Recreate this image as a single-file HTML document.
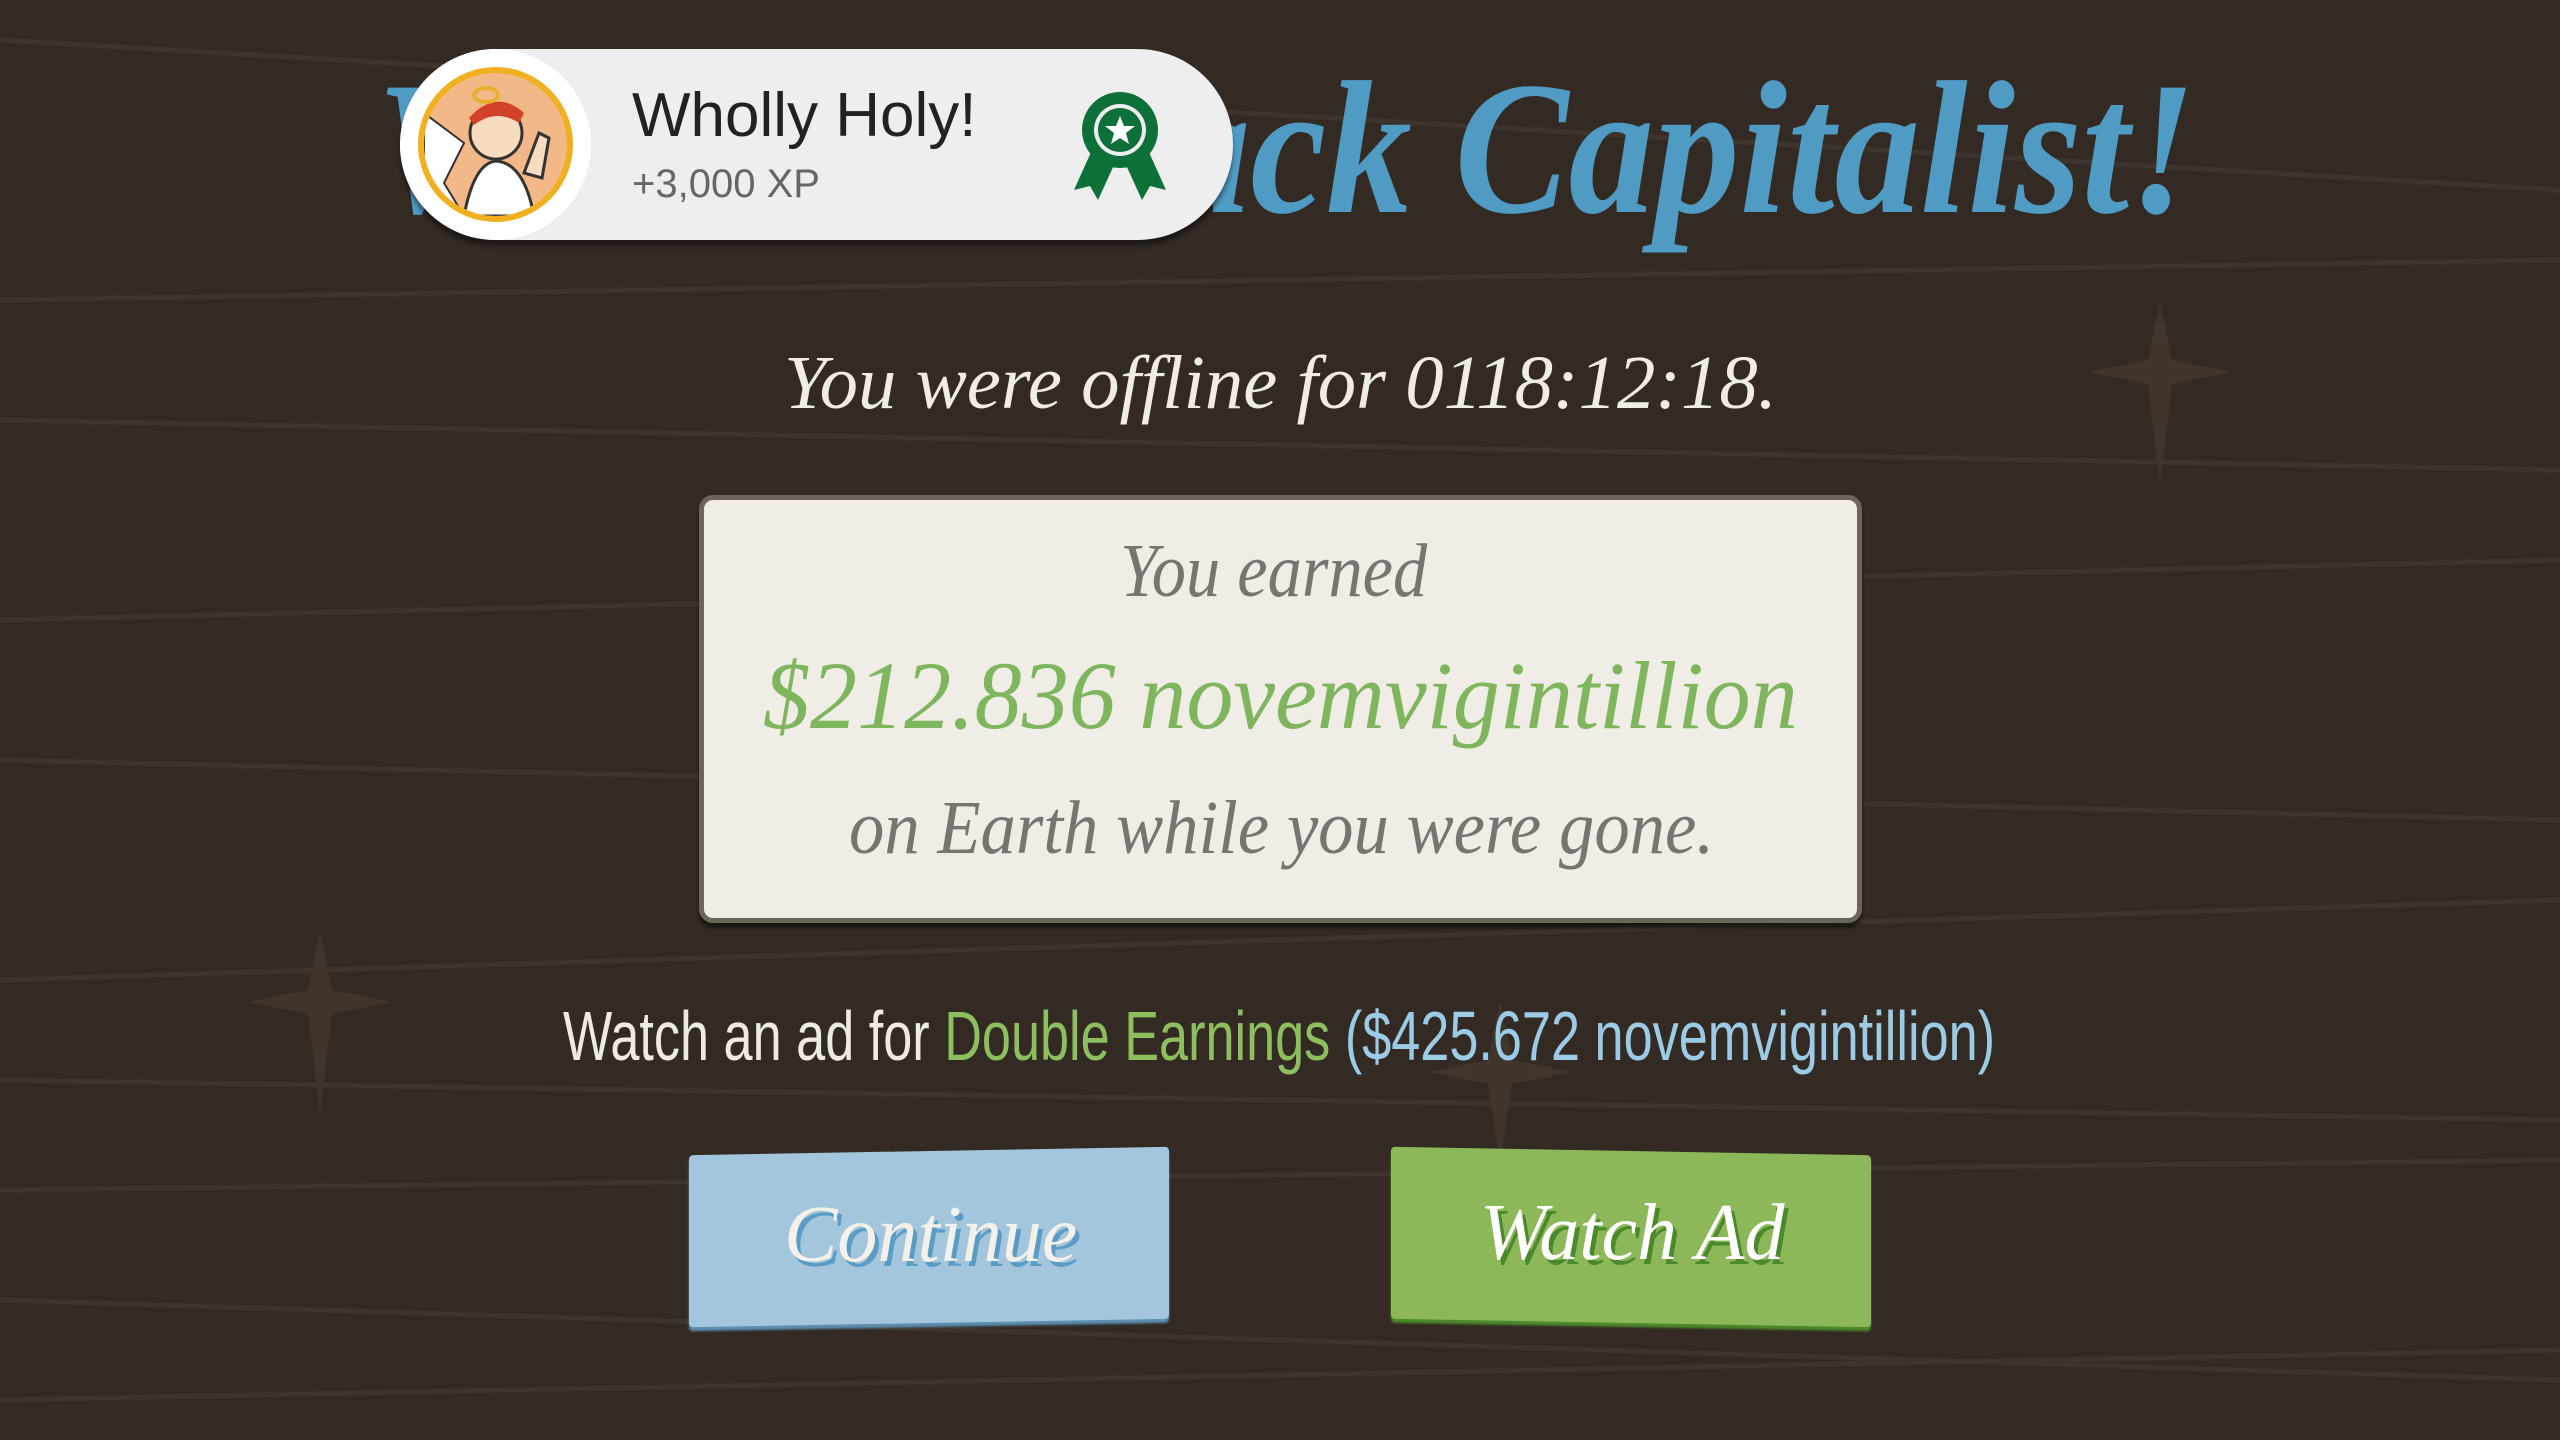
<!DOCTYPE html>
<html><head><meta charset="utf-8"><style>
*{margin:0;padding:0;box-sizing:border-box}
body{width:2560px;height:1440px;background:#332a24;position:relative;overflow:hidden;font-family:"Liberation Sans",sans-serif}
.t{position:absolute;white-space:nowrap;transform-origin:left top}
.s{font-family:"Liberation Serif",serif;font-style:italic}
</style></head><body>
<svg width="2560" height="1440" style="position:absolute;left:0;top:0" stroke="#3d342d" stroke-width="5" fill="none">
<path d="M0 40 L2560 190"/><path d="M0 300 L2560 260"/><path d="M0 420 L2560 470"/><path d="M0 620 L2560 560"/><path d="M0 760 L2560 820"/><path d="M0 980 L2560 900"/><path d="M0 1080 L2560 1120"/><path d="M0 1190 L2560 1160"/><path d="M0 1300 L2560 1380"/><path d="M0 1400 L2560 1350"/>
<g fill="#3f352d" stroke="none">
<path d="M2160 300 l12 60 l60 12 l-60 12 l-12 100 l-12 -100 l-60 -12 l60 -12z"/>
<path d="M320 930 l12 60 l60 12 l-60 12 l-12 100 l-12 -100 l-60 -12 l60 -12z"/>
<path d="M1500 1000 l12 60 l60 12 l-60 12 l-12 80 l-12 -80 l-60 -12 l60 -12z"/>
</g></svg>
<div class="t s" style="left:375px;top:40px;font-size:190px;color:#4f9bc4;font-weight:bold;transform:scaleX(0.9)">Welcome Back Capitalist!</div>
<div style="position:absolute;left:400px;top:49px;width:833px;height:191px;border-radius:96px;background:#eeeeee;box-shadow:0 6px 4px rgba(0,0,0,.4)"></div>
<div style="position:absolute;left:400px;top:49px;width:191px;height:191px;border-radius:50%;background:#fff"></div>
<div style="position:absolute;left:418px;top:67px;width:155px;height:155px;border-radius:50%;background:#f3b888;border:6px solid #f0b020;overflow:hidden">
<svg width="143" height="143" viewBox="0 0 143 143"><path d="M0 40 L40 70 L20 110 L40 143 H0Z" fill="#fff" stroke="#333" stroke-width="2"/><circle cx="72" cy="60" r="26" fill="#f7dcc0" stroke="#333" stroke-width="3"/><path d="M45 45 Q72 15 100 40 L95 50 Q72 35 50 52Z" fill="#d2412a"/><ellipse cx="62" cy="22" rx="12" ry="7" fill="none" stroke="#e8b030" stroke-width="4"/><path d="M40 143 Q50 90 72 88 Q100 90 110 143Z" fill="#fff" stroke="#333" stroke-width="3"/><path d="M100 100 L115 60 L125 65 L118 105Z" fill="#f7dcc0" stroke="#333" stroke-width="3"/></svg></div>
<div class="t" style="left:632px;top:80px;font-size:62px;color:#222">Wholly Holy!</div>
<div class="t" style="left:632px;top:162px;font-size:40px;color:#666">+3,000 XP</div>
<svg style="position:absolute;left:1070px;top:90px" width="100" height="115" viewBox="0 0 100 115">
<path d="M22 60 L4 100 L20 96 L28 110 L44 75Z M78 60 L96 100 L80 96 L72 110 L56 75Z" fill="#0c7038"/>
<circle cx="50" cy="40" r="38" fill="#0c7038"/><circle cx="50" cy="40" r="26" fill="#eee"/><circle cx="50" cy="40" r="22" fill="#0c7038"/>
<path d="M50 26 l4 10 h11 l-9 7 l3 11 l-9 -6 l-9 6 l3 -11 l-9 -7 h11z" fill="#fff"/></svg>
<div class="t s" style="left:784px;top:340px;font-size:76px;color:#f0ece6;transform:scaleX(1.01)">You were offline for 0118:12:18.</div>
<div style="position:absolute;left:699px;top:495px;width:1163px;height:428px;background:#f0ece6;border:5px solid #6d645c;border-radius:14px;box-shadow:0 5px 3px rgba(0,0,0,.5)"></div>
<div class="t s" style="left:1120px;top:528px;font-size:76px;color:#7a7470;transform:scaleX(0.9)">You earned</div>
<div class="t s" style="left:763px;top:640px;font-size:96px;color:#7eb55d;transform:scaleX(0.98)">$212.836 novemvigintillion</div>
<div class="t s" style="left:849px;top:785px;font-size:76px;color:#7a7470;transform:scaleX(0.93)">on Earth while you were gone.</div>
<div class="t" style="left:563px;top:996px;font-size:70px;color:#eeeae4;transform:scaleX(0.746)">Watch an ad for <span style="color:#8dbf5e">Double Earnings</span> <span style="color:#9ccbe5">($425.672 novemvigintillion)</span></div>
<div style="position:absolute;left:689px;top:1151px;width:480px;height:172px;background:#a3c6dc;border-radius:4px;transform:skewY(-1deg);box-shadow:0 4px 2px #5c8fb0"></div>
<div class="t s" style="left:784px;top:1190px;font-size:80px;color:#f4f0ea;text-shadow:4px 5px 0 #5a9cc5">Continue</div>
<div style="position:absolute;left:1391px;top:1151px;width:480px;height:172px;background:#8db85a;border-radius:4px;transform:skewY(1deg);box-shadow:0 4px 2px #4d8a2a"></div>
<div class="t s" style="left:1480px;top:1188px;font-size:80px;color:#fff;text-shadow:4px 5px 0 #4a8a2a">Watch Ad</div>
</body></html>
